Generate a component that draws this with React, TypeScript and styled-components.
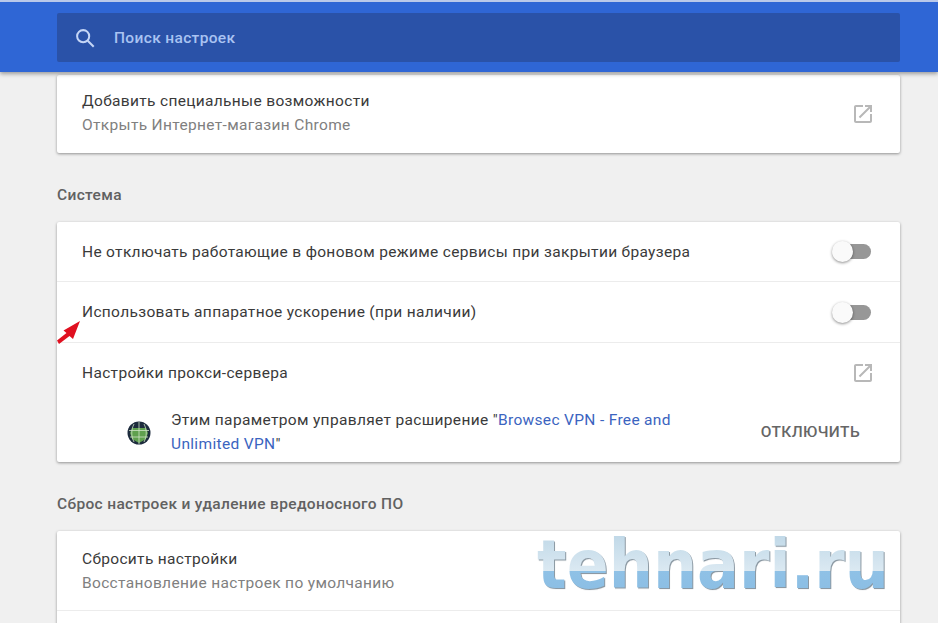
import styled, { createGlobalStyle } from 'styled-components'

const GlobalStyle = createGlobalStyle`
  html,
  body {
    margin: 0;
    height: 100%;
    overflow: hidden;
    background: #f0f0f0;
    font-family: Roboto, 'Liberation Sans', sans-serif;
  }
`

const Page = styled.div`
  height: 623px;
  overflow: hidden;
  position: relative;
`

const Header = styled.header`
  position: relative;
  z-index: 2;
  height: 72px;
  border-top: 2px solid #b9c8ea;
  background: #2f66d5;
  box-shadow: 0 2px 4px rgba(0, 0, 0, 0.35);
  padding: 11px 38px 0 57px;
  box-sizing: border-box;
`

const SearchBar = styled.div`
  height: 49px;
  background: #2a52a8;
  border-radius: 2px;
  display: flex;
  align-items: center;
  padding-left: 17px;
  gap: 18px;
  color: #a9c3f2;
  font-size: 15.5px;
  font-weight: 500;
  letter-spacing: 0.35px;
`

const Main = styled.main`
  padding: 3px 38px 0 57px;
  display: flex;
  flex-direction: column;
`

const Card = styled.section`
  position: relative;
  background: #fff;
  border-radius: 2px;
  box-shadow: 0 1px 3px rgba(0, 0, 0, 0.4);
`

const SectionTitle = styled.h2`
  margin: 0;
  height: 69px;
  padding-top: 32px;
  box-sizing: border-box;
  font-size: 15.5px;
  line-height: 20px;
  font-weight: 500;
  color: #616161;
  letter-spacing: 0.34px;
`

const Row = styled.div<{ $height: number; $divider?: boolean }>`
  height: ${(p) => p.$height}px;
  box-sizing: border-box;
  padding: 0 25px 0 25px;
  display: flex;
  align-items: center;
  justify-content: space-between;
  border-bottom: ${(p) => (p.$divider ? '1px solid #ececec' : 'none')};
`

const TextStack = styled.div<{ $lift?: boolean }>`
  display: flex;
  flex-direction: column;
  gap: 6px;
  margin-bottom: ${(p) => (p.$lift ? '2px' : '0')};
`

const Label = styled.div`
  font-size: 15.5px;
  line-height: 18px;
  color: #3a3a3a;
  letter-spacing: 0.33px;
`

const Sub = styled.div`
  font-size: 15.5px;
  line-height: 18px;
  color: #808080;
  letter-spacing: 0.33px;
`

const SwitchTrack = styled.div`
  position: relative;
  width: 36px;
  height: 15px;
  border-radius: 8px;
  background: #979797;
  margin-right: 4px;
`

const SwitchKnob = styled.div`
  position: absolute;
  left: -3px;
  top: -3px;
  width: 21px;
  height: 21px;
  border-radius: 50%;
  background: #fafafa;
  box-shadow: 0 1px 3px rgba(0, 0, 0, 0.45);
`

const PolicyRow = styled.div`
  height: 60px;
  padding: 0 40px 0 70px;
  display: flex;
  align-items: flex-start;
`

const PolicyText = styled.div`
  width: 540px;
  margin: 6px 0 0 20px;
  font-size: 15.5px;
  line-height: 24px;
  color: #3a3a3a;
  letter-spacing: 0.33px;
`

const GlobeWrap = styled.div`
  margin-top: 19px;
  width: 24px;
  height: 24px;
`

const PolicyLink = styled.span`
  color: #3b64c0;
`

const DisableButton = styled.div`
  margin-left: auto;
  margin-top: 21px;
  font-size: 15.5px;
  line-height: 18px;
  font-weight: 500;
  color: #666;
  letter-spacing: 0.4px;
`

const ArrowMark = styled.svg`
  position: absolute;
  left: -1px;
  top: 98px;
`

const Watermark = styled.div`
  position: absolute;
  right: 11px;
  top: 1px;
  font-family: 'DejaVu Sans', sans-serif;
  font-weight: 700;
  font-size: 62px;
  line-height: 66px;
  background: linear-gradient(to bottom, #bcd6e6 0%, #dbe9f2 58%, #8fc1e6 58%, #8abde3 100%);
  -webkit-background-clip: text;
  background-clip: text;
  color: transparent;
  filter: drop-shadow(1px 1px 0 #8c99a3);
  transform: scaleY(1.08);
`

function SearchIcon() {
  return (
    <svg width="22" height="22" viewBox="0 0 24 24" fill="none" stroke="#c5d6f6" strokeWidth="2.2">
      <circle cx="10" cy="10" r="6.6" />
      <path d="M15 15l6.5 6.5" />
    </svg>
  )
}

function ExternalIcon() {
  return (
    <svg width="24" height="24" viewBox="0 0 24 24" fill="#b8b8b8">
      <path d="M19 19H5V5h7V3H5c-1.11 0-2 .9-2 2v14c0 1.1.89 2 2 2h14c1.1 0 2-.9 2-2v-7h-2v7zM14 3v2h3.59l-9.83 9.83 1.41 1.41L19 6.41V10h2V3h-7z" />
    </svg>
  )
}

function Globe() {
  return (
    <svg width="24" height="24" viewBox="0 0 24 24" fill="none">
      <circle cx="12" cy="12" r="11.5" fill="#1d2b3d" />
      <path d="M5 7h14l2 5-2 6-7 4-7-4-2-6z" fill="#5fa04e" />
      <path d="M2 9.5h20M3 16h18M12 1v22M7 3c-3 6-3 12 0 18M17 3c3 6 3 12 0 18" stroke="#cfe3c6" strokeWidth="0.8" />
    </svg>
  )
}

function Toggle() {
  return (
    <SwitchTrack>
      <SwitchKnob />
    </SwitchTrack>
  )
}

export default function App() {
  return (
    <Page>
      <GlobalStyle />
      <Header>
        <SearchBar>
          <SearchIcon />
          <span>Поиск настроек</span>
        </SearchBar>
      </Header>
      <Main>
        <Card>
          <Row $height={78}>
            <TextStack $lift>
              <Label>Добавить специальные возможности</Label>
              <Sub>Открыть Интернет-магазин Chrome</Sub>
            </TextStack>
            <ExternalIcon />
          </Row>
        </Card>

        <SectionTitle>Система</SectionTitle>
        <Card>
          <Row $height={60} $divider>
            <Label>Не отключать работающие в фоновом режиме сервисы при закрытии браузера</Label>
            <Toggle />
          </Row>
          <Row $height={61} $divider>
            <Label>Использовать аппаратное ускорение (при наличии)</Label>
            <Toggle />
          </Row>
          <Row $height={59}>
            <Label>Настройки прокси-сервера</Label>
            <ExternalIcon />
          </Row>
          <PolicyRow>
            <GlobeWrap>
              <Globe />
            </GlobeWrap>
            <PolicyText>
              Этим параметром управляет расширение "<PolicyLink>Browsec VPN - Free and</PolicyLink>
              <br />
              <PolicyLink>Unlimited VPN</PolicyLink>"
            </PolicyText>
            <DisableButton>ОТКЛЮЧИТЬ</DisableButton>
          </PolicyRow>
          <ArrowMark width="26" height="25" viewBox="0 0 26 25">
            <path d="M24 1L7.5 10.5l3 2.5L1 20.5l2 3.5 10.5-8 3.5 3z" fill="#e01020" />
          </ArrowMark>
        </Card>

        <SectionTitle>Сброс настроек и удаление вредоносного ПО</SectionTitle>
        <Card>
          <Row $height={80} $divider>
            <TextStack>
              <Label>Сбросить настройки</Label>
              <Sub>Восстановление настроек по умолчанию</Sub>
            </TextStack>
          </Row>
          <Row $height={60} />
          <Watermark>tehnari.ru</Watermark>
        </Card>
      </Main>
    </Page>
  )
}
